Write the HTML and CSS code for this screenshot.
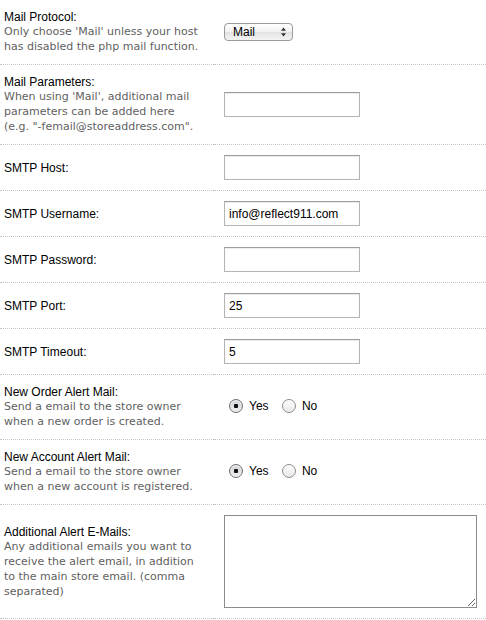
FILE: index.html
```html
<!DOCTYPE html>
<html>
<head>
<meta charset="utf-8">
<link rel="stylesheet" href="styles.css">
</head>
<body>
<table class="form">
  <colgroup><col class="col-label"><col class="col-field"></colgroup>
  <tr>
    <td class="label">Mail Protocol:<span class="help">Only choose 'Mail' unless your host has disabled the php mail function.</span></td>
    <td class="field">
      <span class="select-wrap">
        <select class="select"><option>Mail</option><option>SMTP</option></select>
        <svg class="select-arrows" width="7" height="10" viewBox="0 0 7 10"><path d="M3.5 0.5 L6 3.8 L1 3.8 Z M3.5 9.5 L6 6.2 L1 6.2 Z" fill="#333"/></svg>
      </span>
    </td>
  </tr>
  <tr>
    <td class="label">Mail Parameters:<span class="help">When using 'Mail', additional mail parameters can be added here <span class="nowrap">(e.g. "-femail@storeaddress.com".</span></span></td>
    <td class="field"><input class="text" type="text" value=""></td>
  </tr>
  <tr>
    <td class="label">SMTP Host:</td>
    <td class="field"><input class="text" type="text" value=""></td>
  </tr>
  <tr>
    <td class="label">SMTP Username:</td>
    <td class="field"><input class="text" type="text" value="info@reflect911.com"></td>
  </tr>
  <tr>
    <td class="label">SMTP Password:</td>
    <td class="field"><input class="text" type="text" value=""></td>
  </tr>
  <tr>
    <td class="label">SMTP Port:</td>
    <td class="field"><input class="text" type="text" value="25"></td>
  </tr>
  <tr>
    <td class="label">SMTP Timeout:</td>
    <td class="field"><input class="text" type="text" value="5"></td>
  </tr>
  <tr>
    <td class="label">New Order Alert Mail:<span class="help">Send a email to the store owner when a new order is created.</span></td>
    <td class="field">
      <label class="radio"><input type="radio" name="order" checked><span>Yes</span></label>
      <label class="radio"><input type="radio" name="order"><span>No</span></label>
    </td>
  </tr>
  <tr>
    <td class="label">New Account Alert Mail:<span class="help">Send a email to the store owner when a new account is registered.</span></td>
    <td class="field">
      <label class="radio"><input type="radio" name="account" checked><span>Yes</span></label>
      <label class="radio"><input type="radio" name="account"><span>No</span></label>
    </td>
  </tr>
  <tr>
    <td class="label">Additional Alert E-Mails:<span class="help">Any additional emails you want to receive the alert email, in addition to the main store email. (comma separated)</span></td>
    <td class="field field-area"><textarea class="area"></textarea></td>
  </tr>
</table>
</body>
</html>
```

FILE: styles.css
```css
html, body {
  margin: 0;
  padding: 0;
  background: #fff;
}

body {
  font-family: "Liberation Sans", Arial, Helvetica, sans-serif;
  font-size: 12px;
  color: #000;
}

.form {
  width: 486px;
  border-collapse: collapse;
  table-layout: fixed;
}

.col-label {
  width: 214px;
}

.form td {
  border-bottom: 1px dotted #c4c4c4;
  vertical-align: middle;
  padding: 10px;
  line-height: 14px;
}

.form td.label {
  padding-left: 4px;
}

.help {
  display: block;
  font-family: "DejaVu Sans", Verdana, sans-serif;
  font-size: 11px;
  line-height: 15px;
  color: #5f5f5f;
}

.nowrap {
  white-space: nowrap;
}

.text {
  box-sizing: border-box;
  width: 136px;
  height: 25px;
  margin: 0;
  padding: 0 4px;
  border: 1px solid #b4b4b4;
  border-top-color: #9c9c9c;
  box-shadow: inset 0 1px 1px rgba(0,0,0,0.08);
  font-family: "Liberation Sans", Arial, sans-serif;
  font-size: 12px;
  color: #000;
  display: block;
  outline: none;
}

.select-wrap {
  position: relative;
  display: inline-block;
  vertical-align: middle;
}

.select {
  -webkit-appearance: none;
  appearance: none;
  box-sizing: border-box;
  width: 69px;
  height: 18px;
  margin: 0;
  padding: 0 0 0 8px;
  border: 1px solid #9a9a9a;
  border-radius: 4px;
  background: linear-gradient(#ffffff, #f1f1f1 50%, #e2e2e2 51%, #f4f4f4);
  font-family: "Liberation Sans", Arial, sans-serif;
  font-size: 12px;
  color: #000;
  display: block;
  outline: none;
}

.select-arrows {
  position: absolute;
  right: 6px;
  top: 4px;
  pointer-events: none;
}

.radio {
  display: inline-flex;
  align-items: center;
  margin-right: 5px;
}

.radio input {
  -webkit-appearance: none;
  appearance: none;
  box-sizing: border-box;
  width: 14px;
  height: 14px;
  margin: 0 5px 0 5px;
  border: 1px solid #8d8d8d;
  border-radius: 50%;
  background: linear-gradient(#fdfdfd, #e9e9e9);
  box-shadow: inset 0 1px 1px rgba(255,255,255,0.9);
  outline: none;
}

.radio input:checked {
  border-color: #6f6f6f;
  background: radial-gradient(circle at 50% 50%, #111 0, #111 2px, transparent 2.5px), linear-gradient(#cfd1d4, #eef0f2);
}

.radio span {
  margin-left: 1px;
}

.field-area {
  padding-top: 7px;
  padding-bottom: 11px;
}

.area {
  box-sizing: border-box;
  display: block;
  width: 253px;
  height: 93px;
  margin: 0;
  border: 1px solid #8c8c8c;
  font-family: "Liberation Sans", Arial, sans-serif;
  font-size: 12px;
  outline: none;
}
```
